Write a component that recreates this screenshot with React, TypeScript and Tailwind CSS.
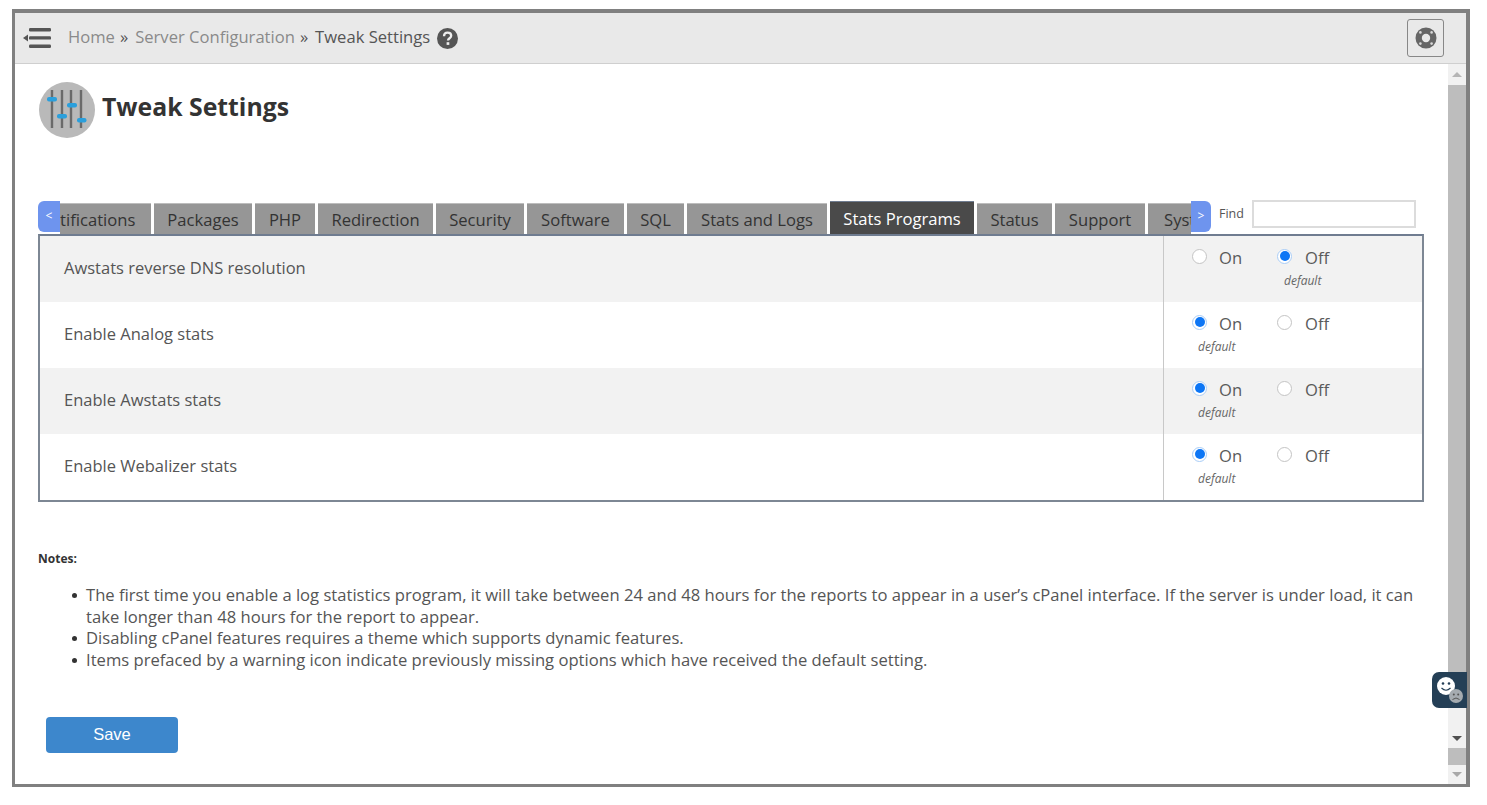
const tabs = [
    {label: "Notifications", w: "w-[129px]"},
    {label: "Packages", w: "w-[98px]"},
    {label: "PHP", w: "w-[60px]"},
    {label: "Redirection", w: "w-[115px]"},
    {label: "Security", w: "w-[88px]"},
    {label: "Software", w: "w-[97px]"},
    {label: "SQL", w: "w-[57px]"},
    {label: "Stats and Logs", w: "w-[140px]"},
    {label: "Stats Programs", w: "w-[144px]", active: true},
    {label: "Status", w: "w-[75px]"},
    {label: "Support", w: "w-[90px]"},
    {label: "System", w: "w-[88px]"},
];

const rows = [
    {label: "Awstats reverse DNS resolution", on: false},
    {label: "Enable Analog stats", on: true},
    {label: "Enable Awstats stats", on: true},
    {label: "Enable Webalizer stats", on: true},
];

const notes = [
    "The first time you enable a log statistics program, it will take between 24 and 48 hours for the reports to appear in a user’s cPanel interface. If the server is under load, it can take longer than 48 hours for the report to appear.",
    "Disabling cPanel features requires a theme which supports dynamic features.",
    "Items prefaced by a warning icon indicate previously missing options which have received the default setting.",
];

function Radio({checked, label}: {checked: boolean; label: string}) {
    return (
        <div className="flex items-center h-[24px]">
            {checked ? (
                <span className="w-[15px] h-[15px] rounded-full bg-white border border-[#a9cdf7] flex items-center justify-center">
                    <span className="w-[10px] h-[10px] rounded-full bg-[#0d76f5]"></span>
                </span>
            ) : (
                <span className="w-[15px] h-[15px] rounded-full bg-white border border-[#c4c4c4]"></span>
            )}
            <span className={`${label === "Off" ? "ml-[13px]" : "ml-[12px]"} text-[16.6px] text-[#5a5a5a] relative top-[2px]`}>{label}</span>
        </div>
    );
}

function Sliders() {
    return (
        <svg width="56" height="56" viewBox="0 0 56 56">
            <circle cx="28" cy="28" r="28" fill="#b9b9b9" />
            <g stroke="#6a6a6a" strokeWidth="2.4">
                <path d="M13 8V46M23 8V46M32 8V46M42 8V46" />
            </g>
            <g fill="#2a9fdc">
                <rect x="8" y="15" width="10" height="4.5" rx="2" />
                <rect x="18" y="32" width="10" height="4.5" rx="2" />
                <rect x="28" y="21" width="10" height="4.5" rx="2" />
                <rect x="38" y="36" width="9.5" height="4.5" rx="2" />
            </g>
        </svg>
    );
}

function LifeRing() {
    return (
        <svg width="22" height="22" viewBox="0 0 22 22">
            <circle cx="11" cy="11" r="10.5" fill="#666" />
            <circle cx="11" cy="11" r="4.2" fill="#e9e9e9" />
            <g fill="#d8d8d8">
                <circle cx="5.4" cy="5.4" r="1.3" />
                <circle cx="16.6" cy="5.4" r="1.3" />
                <circle cx="5.4" cy="16.6" r="1.3" />
                <circle cx="16.6" cy="16.6" r="1.3" />
            </g>
        </svg>
    );
}

function Scrollbar() {
    return (
        <div className="w-[18px] bg-[#f1f1f1] flex flex-col items-center shrink-0">
            <div className="h-[21px] shrink-0 flex items-center justify-center">
                <span className="border-x-[5px] border-x-transparent border-b-[5px] border-b-[#b5b5b5]"></span>
            </div>
            <div className="w-full h-[600px] bg-[#bdbdbd] shrink-0"></div>
            <div className="h-[63px] w-full flex items-end justify-center pb-[7px] shrink-0">
                <span className="border-x-[5px] border-x-transparent border-t-[5px] border-t-[#505050]"></span>
            </div>
            <div className="w-full h-[17px] bg-[#bdbdbd] shrink-0"></div>
            <div className="h-[19px] shrink-0 flex items-center justify-center">
                <span className="border-x-[5px] border-x-transparent border-t-[5px] border-t-[#a8a8a8]"></span>
            </div>
        </div>
    );
}

export default function App() {
    return (
        <div className="w-[1487px] h-[805px] bg-white pl-[12px] pt-[9px] overflow-hidden font-['Open_Sans',sans-serif]">
            <div className="relative w-[1458px] h-[778px] border-l-[3px] border-r-[4px] border-t-[4px] border-b-[3px] border-[#808080] flex flex-col">
                {/* top bar */}
                <div className="h-[51px] shrink-0 bg-[#e9e9e9] border-b border-[#cfcfcf] flex items-center pl-[8px] pr-[22px]">
                    <svg width="28" height="22" viewBox="0 0 28 22" fill="#555">
                        <path d="M0 11L5 7.5V14.5Z" />
                        <rect x="6" y="1" width="22" height="3.4" rx="1.2" />
                        <rect x="6" y="9.2" width="22" height="3.4" rx="1.2" />
                        <rect x="6" y="17.6" width="22" height="3.4" rx="1.2" />
                    </svg>
                    <div className="ml-[17px] flex items-center text-[16.6px] text-[#8a8a8a] relative -top-[1px]">
                        <span>Home</span>
                        <span className="text-[#555] ml-[5px] mr-[7px]">»</span>
                        <span>Server Configuration</span>
                        <span className="text-[#555] mx-[5px]">»</span>
                        <span className="text-[#555] ml-[2px]">Tweak Settings</span>
                        <svg className="ml-[7px] relative top-[2px]" width="21" height="21" viewBox="0 0 21 21">
                            <circle cx="10.5" cy="10.5" r="10.5" fill="#555" />
                            <path d="M7 8.2C7 5.9 8.6 4.6 10.6 4.6C12.6 4.6 14.2 5.9 14.2 7.8C14.2 10.2 11 10.3 11 12.6" stroke="#eee" strokeWidth="2.3" fill="none" />
                            <rect x="9.6" y="14.2" width="2.7" height="2.7" fill="#eee" />
                        </svg>
                    </div>
                    <button className="ml-auto w-[37px] h-[38px] border border-[#888] rounded-[3px] flex items-center justify-center">
                        <LifeRing />
                    </button>
                </div>

                <div className="flex-1 flex min-h-0">
                    <div className="flex-1 min-w-0 pl-[23px] pr-[24px]">
                        <div className="flex items-center mt-[18px] h-[56px] pl-[1px]">
                            <Sliders />
                            <h1 className="ml-[7px] text-[24.8px] font-bold text-[#333] relative -top-[3px]">Tweak Settings</h1>
                        </div>

                        {/* tab strip */}
                        <div className="flex items-end mt-[63px] h-[33px]">
                            <button className="w-[22px] h-[31px] mb-[2px] bg-[#6e94ee] rounded-l-[6px] text-white text-[12px] shrink-0 pb-[1px]">&lt;</button>
                            <div className="w-[1131px] overflow-hidden shrink-0">
                                <div className="flex items-end gap-[3px] -ml-[38px] w-max">
                                    {tabs.map((tab) => (
                                        <div
                                            key={tab.label}
                                            className={`${tab.w} text-[16.6px] pt-[3px] flex items-center justify-center shrink-0 border-t ${tab.active ? "h-[33px] bg-[#4a4a4a] border-[#6f7c90] text-white" : "h-[31px] bg-[#969696] border-[#bdbdbd] text-[#333]"}`}
                                        >
                                            {tab.label}
                                        </div>
                                    ))}
                                </div>
                            </div>
                            <button className="w-[20px] h-[31px] mb-[2px] bg-[#6e94ee] rounded-r-[6px] text-white text-[12px] shrink-0 pb-[1px]">&gt;</button>
                            <div className="self-start flex items-center -mt-[1px]">
                                <span className="ml-[8px] text-[12.5px] text-[#555]">Find</span>
                                <input className="ml-[8px] w-[164px] h-[28px] border-2 border-[#dcdcdc] bg-white" />
                            </div>
                        </div>

                        {/* settings table */}
                        <div className="w-[1386px] border-2 border-[#7d8794] border-t-[#6f7c90]">
                            {rows.map((row, i) => (
                                <div key={row.label} className={`flex h-[66px] ${i % 2 === 0 ? "bg-[#f2f2f2]" : "bg-white"}`}>
                                    <div className="flex-1 pl-[24px] pb-[2px] flex items-center text-[16.5px] text-[#555]">{row.label}</div>
                                    <div className="w-[259px] border-l border-[#c8c8c8] pl-[28px] pt-[8px] grid grid-cols-[85px_85px] content-start">
                                        <Radio checked={row.on} label="On" />
                                        <Radio checked={!row.on} label="Off" />
                                        <div className={`text-[12px] italic text-[#666] mt-[3px] leading-[20px] ${row.on ? "col-start-1 pl-[6px]" : "col-start-2 pl-[7px]"}`}>default</div>
                                    </div>
                                </div>
                            ))}
                        </div>

                        <div className="mt-[47px] text-[12px] font-bold text-[#333] leading-[20px]">Notes:</div>
                        <ul className="mt-[15px] ml-[34px] w-[1354px] text-[16.63px] leading-[21.5px] text-[#555]">
                            {notes.map((note) => (
                                <li key={note} className="flex">
                                    <span className="w-[5px] h-[5px] mt-[9px] rounded-full bg-[#333] shrink-0"></span>
                                    <span className="ml-[9px]">{note}</span>
                                </li>
                            ))}
                        </ul>

                        <button className="mt-[47px] ml-[8px] w-[132px] h-[36px] pb-[2px] rounded-[4px] bg-[#3d87cc] text-white text-[16.5px] font-['Liberation_Sans',sans-serif]">Save</button>
                    </div>
                    <Scrollbar />
                </div>

                {/* feedback widget */}
                <div className="absolute left-[1417px] top-[659px] w-[35px] h-[36px] bg-[#243f56] rounded-l-[7px]">
                    <svg width="35" height="36" viewBox="0 0 35 36">
                        <circle cx="14" cy="14" r="9" fill="#fff" />
                        <circle cx="11" cy="11.5" r="1.3" fill="#243f56" />
                        <circle cx="17" cy="11.5" r="1.3" fill="#243f56" />
                        <path d="M9.5 16Q14 20.5 18.5 16" stroke="#243f56" strokeWidth="1.2" fill="none" />
                        <circle cx="24" cy="24" r="7" fill="#a5abb0" />
                        <circle cx="21.8" cy="22.5" r="1" fill="#555" />
                        <circle cx="26.2" cy="22.5" r="1" fill="#555" />
                        <path d="M20.5 27.5Q24 24.5 27.5 27.5" stroke="#555" strokeWidth="1" fill="none" />
                    </svg>
                </div>
            </div>
        </div>
    );
}
